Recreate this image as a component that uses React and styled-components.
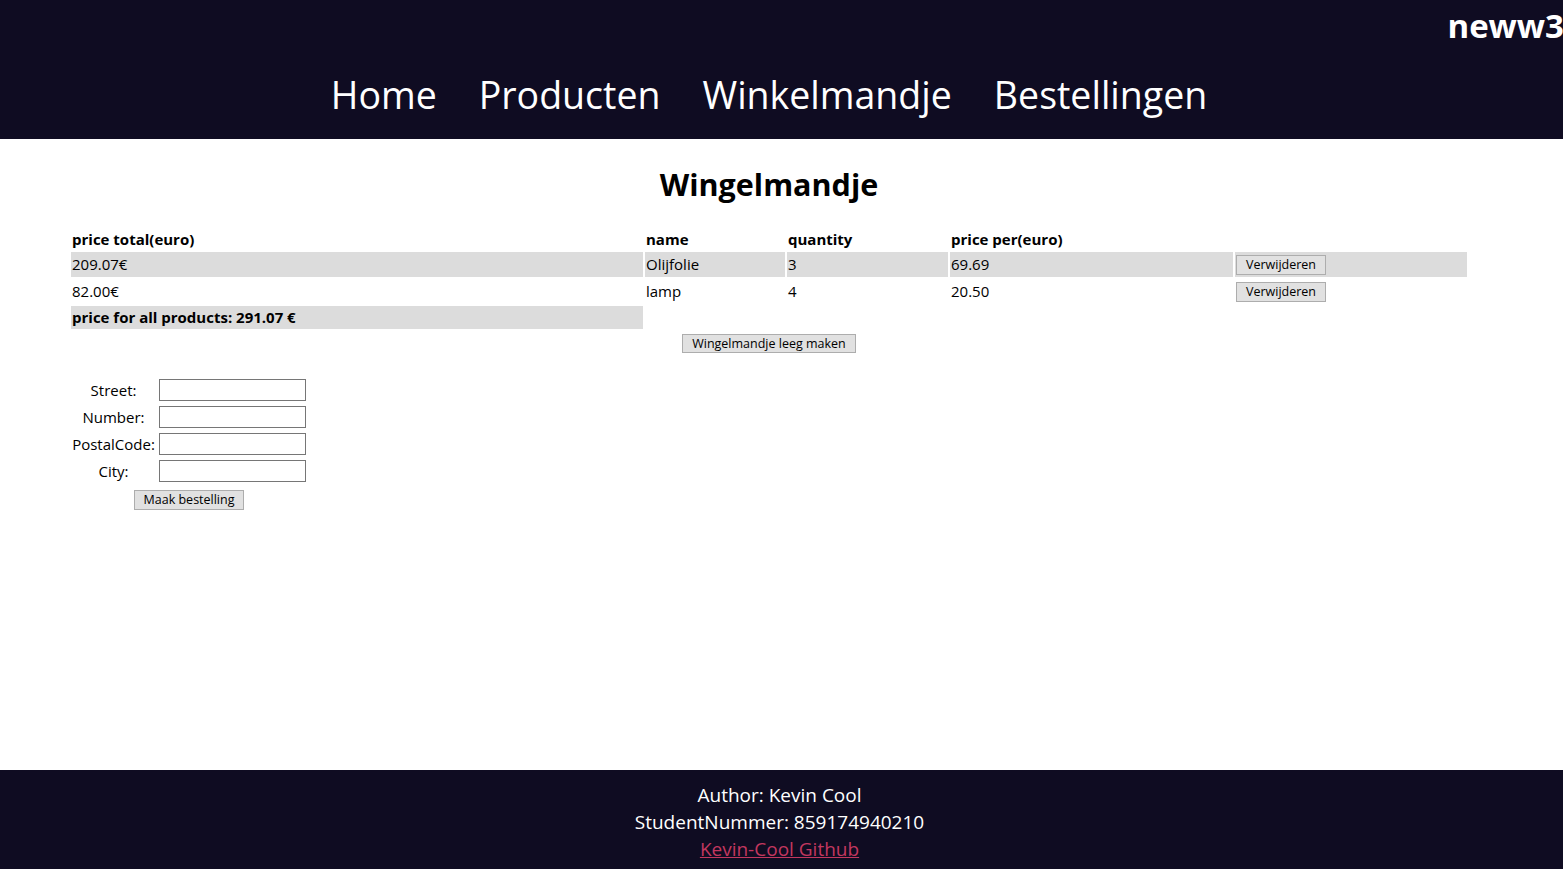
import React from "react";
import styled, { createGlobalStyle } from "styled-components";

const Global = createGlobalStyle`
  html, body { margin: 0; padding: 0; }
  body { font-family: "Open Sans", "Noto Sans", sans-serif; color: #000; background: #fff; }
`;

const Page = styled.div`
  min-height: 100vh;
  display: flex;
  flex-direction: column;
`;

const Header = styled.header`
  background: #0f0c22;
  color: #fff;
  padding: 6px 0 19px;
  display: flex;
  flex-direction: column;
`;

const Brand = styled.div`
  align-self: flex-end;
  font-weight: 700;
  font-size: 33px;
  line-height: 40px;
  margin-right: -1px;
`;

const Nav = styled.nav`
  display: flex;
  justify-content: center;
  gap: 42px;
  margin-top: 24px;
  padding-right: 25px;
`;

const NavLink = styled.a`
  color: #fff;
  text-decoration: none;
  font-size: 37.5px;
  line-height: 50px;
`;

const Main = styled.main`
  display: flex;
  flex-direction: column;
  align-items: center;
  padding-right: 25px;
  flex: 1;
`;

const Title = styled.h1`
  margin: 25px 0 21px;
  font-size: 30.5px;
  line-height: 40px;
  font-weight: 700;
`;

const CartTable = styled.table`
  border-spacing: 2px;
  font-size: 15px;
  table-layout: fixed;
  width: 1400px;
`;

const Cell = styled.td`
  padding: 1px;
  height: ${(p) => (p.$tall ? "23px" : "21px")};
  line-height: 21px;
  background: ${(p) => (p.$shade ? "#dcdcdc" : "transparent")};
  font-weight: ${(p) => (p.$bold ? 700 : 400)};
  vertical-align: middle;
  text-align: left;
`;

const HeadCell = styled.th`
  padding: 2px 1px 0;
  height: 21px;
  line-height: 21px;
  font-weight: 700;
  text-align: left;
`;

const Btn = styled.button`
  font-family: "Open Sans", "Noto Sans", sans-serif;
  font-size: 12.5px;
  line-height: 16px;
  height: ${(p) => p.$h || "20px"};
  padding: 0 ${(p) => p.$px || "9px"};
  margin: 0;
  background: #e1e1e1;
  border: 1px solid #adadad;
  color: #000;
  vertical-align: middle;
  border-radius: 0;
`;

const ClearRow = styled.div`
  margin-top: 3px;
  display: flex;
  justify-content: center;
`;

const FormArea = styled.div`
  align-self: stretch;
  padding-left: 69px;
  margin-top: 22px;
`;

const FormTable = styled.table`
  border-spacing: 2px;
  font-size: 15px;
`;

const LabelCell = styled.td`
  padding: 1px;
  width: 83px;
  height: 23px;
  text-align: center;
  vertical-align: middle;
`;

const InputCell = styled.td`
  padding: 1px;
  vertical-align: middle;
`;

const Field = styled.input`
  box-sizing: border-box;
  width: 147px;
  height: 22px;
  border: 1px solid #767676;
  margin: 0;
  display: block;
`;

const SubmitCell = styled.td`
  padding: 3px 1px 1px;
  text-align: center;
`;

const Footer = styled.footer`
  background: #0f0c22;
  color: #fff;
  text-align: center;
  font-size: 19px;
  line-height: 27px;
  padding: 12px 4px 6px 0;
`;

const FootLink = styled.a`
  color: #c2375f;
  text-decoration: underline;
`;

const items = [
  { total: "209.07€", name: "Olijfolie", qty: "3", per: "69.69" },
  { total: "82.00€", name: "lamp", qty: "4", per: "20.50" },
];

export default function App() {
  return (
    <Page>
      <Global />
      <Header>
        <Brand>neww3</Brand>
        <Nav>
          <NavLink href="#">Home</NavLink>
          <NavLink href="#">Producten</NavLink>
          <NavLink href="#">Winkelmandje</NavLink>
          <NavLink href="#">Bestellingen</NavLink>
        </Nav>
      </Header>
      <Main>
        <Title>Wingelmandje</Title>
        <CartTable>
          <colgroup>
            <col style={{ width: 572 }} />
            <col style={{ width: 140 }} />
            <col style={{ width: 161 }} />
            <col style={{ width: 283 }} />
            <col style={{ width: 232 }} />
          </colgroup>
          <thead>
            <tr>
              <HeadCell>price total(euro)</HeadCell>
              <HeadCell>name</HeadCell>
              <HeadCell>quantity</HeadCell>
              <HeadCell>price per(euro)</HeadCell>
              <HeadCell />
            </tr>
          </thead>
          <tbody>
            {items.map((it, i) => (
              <tr key={it.name}>
                <Cell $tall $shade={i % 2 === 0}>{it.total}</Cell>
                <Cell $tall $shade={i % 2 === 0}>{it.name}</Cell>
                <Cell $tall $shade={i % 2 === 0}>{it.qty}</Cell>
                <Cell $tall $shade={i % 2 === 0}>{it.per}</Cell>
                <Cell $tall $shade={i % 2 === 0}>
                  <Btn>Verwijderen</Btn>
                </Cell>
              </tr>
            ))}
            <tr>
              <Cell $shade $bold>price for all products: 291.07 €</Cell>
            </tr>
          </tbody>
        </CartTable>
        <ClearRow>
          <Btn $h="19px">Wingelmandje leeg maken</Btn>
        </ClearRow>
        <FormArea>
          <FormTable>
            <tbody>
              {["Street:", "Number:", "PostalCode:", "City:"].map((l) => (
                <tr key={l}>
                  <LabelCell>{l}</LabelCell>
                  <InputCell>
                    <Field type="text" />
                  </InputCell>
                </tr>
              ))}
              <tr>
                <SubmitCell colSpan={2}>
                  <Btn>Maak bestelling</Btn>
                </SubmitCell>
              </tr>
            </tbody>
          </FormTable>
        </FormArea>
      </Main>
      <Footer>
        <div>Author: Kevin Cool</div>
        <div>StudentNummer: 859174940210</div>
        <FootLink href="#">Kevin-Cool Github</FootLink>
      </Footer>
    </Page>
  );
}
